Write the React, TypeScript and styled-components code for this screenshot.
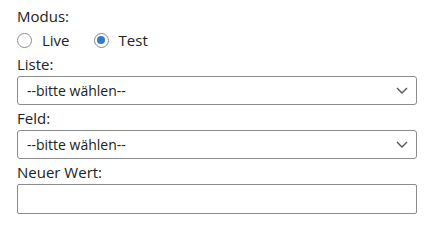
import React from "react";
import styled, { createGlobalStyle } from "styled-components";

const GlobalStyle = createGlobalStyle`
  html, body {
    margin: 0;
    padding: 0;
    background: #ffffff;
  }
  body {
    font-family: "Open Sans", "Noto Sans", sans-serif;
    color: #222222;
  }
`;

const Form = styled.form`
  width: 400px;
  padding: 4px 20px 0 17px;
  font-size: 15px;
  line-height: 24px;
`;

const Label = styled.div<{ $gap?: number }>`
  height: 24px;
  margin-top: ${(p) => p.$gap ?? 0}px;
`;

const RadioRow = styled.div`
  display: flex;
  align-items: center;
  height: 24px;
  gap: 24px;
`;

const RadioLabel = styled.label`
  display: flex;
  align-items: center;
  gap: 10px;
  cursor: pointer;
`;

const Radio = styled.input.attrs({ type: "radio" })`
  appearance: none;
  margin: 0;
  width: 15px;
  height: 15px;
  border: 1px solid #8a8a8a;
  border-radius: 50%;
  background: #fff;
  display: grid;
  place-items: center;

  &:checked::after {
    content: "";
    width: 8px;
    height: 8px;
    border-radius: 50%;
    background: #2e7bcf;
  }
`;

const SelectWrap = styled.div`
  position: relative;
  width: 400px;
`;

const Select = styled.select`
  appearance: none;
  box-sizing: border-box;
  width: 100%;
  height: 29px;
  margin: 0;
  padding: 0 30px 0 9px;
  border: 1px solid #8c8c8c;
  border-radius: 3px;
  background: #fff;
  font: inherit;
  font-size: 14px;
  color: #222;
`;

const Chevron = styled.svg`
  position: absolute;
  right: 9px;
  top: 11px;
  pointer-events: none;
`;

const TextInput = styled.input`
  box-sizing: border-box;
  width: 400px;
  height: 30px;
  margin: 0;
  border: 1px solid #8c8c8c;
  border-radius: 2px;
  font: inherit;
`;

function Dropdown() {
  return (
    <SelectWrap>
      <Select defaultValue="">
        <option value="">--bitte wählen--</option>
      </Select>
      <Chevron width="12" height="7" viewBox="0 0 12 7">
        <path d="M1 1l5 5 5-5" fill="none" stroke="#555" strokeWidth="1.4" />
      </Chevron>
    </SelectWrap>
  );
}

export default function App() {
  return (
    <>
      <GlobalStyle />
      <Form>
        <Label>Modus:</Label>
        <RadioRow>
          <RadioLabel>
            <Radio name="modus" value="live" />
            Live
          </RadioLabel>
          <RadioLabel>
            <Radio name="modus" value="test" defaultChecked />
            Test
          </RadioLabel>
        </RadioRow>
        <Label>Liste:</Label>
        <Dropdown />
        <Label $gap={1}>Feld:</Label>
        <Dropdown />
        <Label $gap={1}>Neuer Wert:</Label>
        <TextInput type="text" />
      </Form>
    </>
  );
}
